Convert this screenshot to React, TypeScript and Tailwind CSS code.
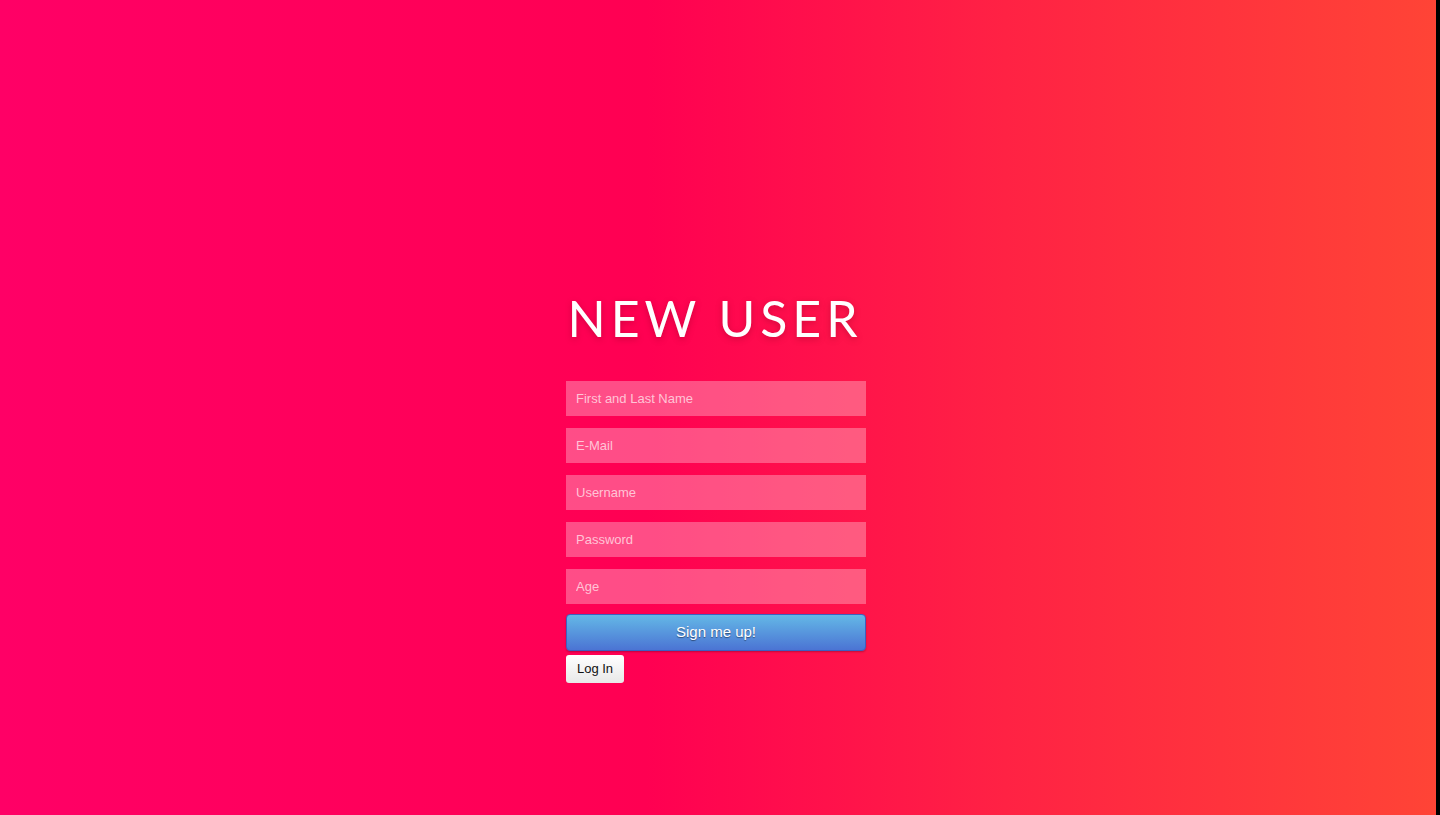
const fields = ["First and Last Name", "E-Mail", "Username", "Password", "Age"]

const App = () => {
  return (
    <div className="flex h-[815px] w-[1440px] overflow-hidden bg-black">
      <div className="h-full w-[1436px] bg-[linear-gradient(to_right,#ff0066_0%,#ff0052_45%,#ff2244_70%,#ff4436_100%)]">
        <div className="ml-[566px] w-[300px] pt-[288px]">
          <h1 className="-ml-[2px] whitespace-nowrap text-center font-['Lato',sans-serif] text-[50px] font-normal leading-[60px] tracking-[0.1em] text-white [text-shadow:0_2px_6px_rgba(120,0,30,0.35)]">
            NEW USER
          </h1>
          <form className="mt-[33px] flex flex-col gap-3 font-['Liberation_Sans',Arial,sans-serif]">
            {fields.map((f) => (
              <input
                key={f}
                type={f === "Password" ? "password" : "text"}
                placeholder={f}
                className="h-[35px] w-[300px] bg-white/30 px-[10px] text-[13px] text-white outline-none placeholder:text-[#ffc4d6]"
              />
            ))}
          </form>
          <button className="mt-[10px] h-[37px] w-[300px] rounded-[4px] border border-[#3d5fc0] bg-[linear-gradient(to_bottom,#64b8e6,#4b74d4)] font-['Liberation_Sans',Arial,sans-serif] text-[15px] text-white shadow-[0_1px_2px_rgba(0,0,0,0.25)] [text-shadow:0_1px_1px_rgba(0,0,0,0.45)]">
            Sign me up!
          </button>
          <div>
            <button className="mt-[4px] h-[28px] w-[58px] rounded-[3px] bg-[linear-gradient(to_bottom,#ffffff,#e8e8e8)] font-['Liberation_Sans',Arial,sans-serif] text-[13px] text-[#111]">
              Log In
            </button>
          </div>
        </div>
      </div>
    </div>
  )
}

export default App
